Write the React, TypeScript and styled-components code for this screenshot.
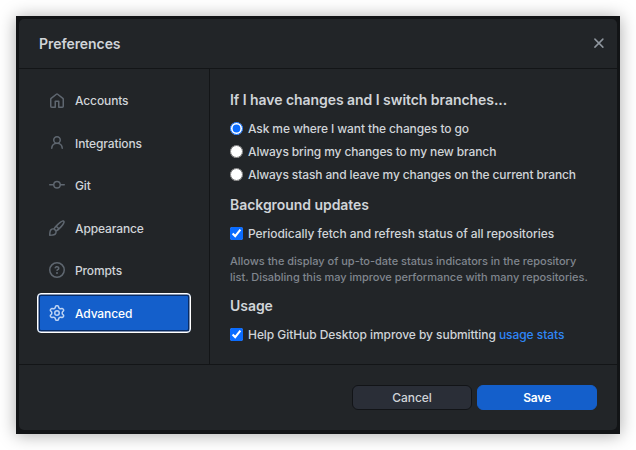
import React from "react";
import styled, { createGlobalStyle } from "styled-components";

const GlobalStyle = createGlobalStyle`
  *, *::before, *::after { box-sizing: border-box; }
  body {
    margin: 0;
    background: #fff;
    font-family: Inter, "Liberation Sans", sans-serif;
    font-size: 12px;
    font-weight: 450;
    line-height: 16px;
    color: #d0d4d8;
    overflow: hidden;
  }
`;

const Page = styled.main`
  height: 450px;
  padding: 16px;
`;

const Backdrop = styled.div`
  width: 604px;
  height: 418px;
  padding: 3px 3px 4px;
  background: #121416;
  box-shadow: 0 1px 16px rgba(0, 0, 0, 0.34);
`;

const Dialog = styled.section`
  height: 411px;
  display: flex;
  flex-direction: column;
  background: #222528;
  border-radius: 5px;
`;

const Header = styled.header`
  flex: 0 0 50px;
  display: flex;
  align-items: center;
  justify-content: space-between;
  padding: 0 13px 0 20px;
  border-bottom: 1px solid #131517;
`;

const Title = styled.h1`
  margin: 0;
  font-size: 14px;
  line-height: 20px;
  font-weight: 600;
  letter-spacing: -0.06px;
`;

const CloseButton = styled.button`
  display: flex;
  padding: 0;
  border: 0;
  background: none;
  color: #8f969e;
`;

const Body = styled.div`
  flex: 1;
  display: flex;
  min-height: 0;
`;

const Sidebar = styled.nav`
  flex: 0 0 191px;
  padding: 12px 18px 0;
  border-right: 1px solid #131517;
`;

const Tab = styled.button<{ $selected?: boolean }>`
  display: flex;
  align-items: center;
  gap: 10px;
  width: 154px;
  height: 40px;
  margin: 0 0 2.4px;
  padding: 0 0 0 ${(p) => (p.$selected ? 11 : 12)}px;
  border: ${(p) => (p.$selected ? "1px solid #fff" : "0")};
  border-radius: 4px;
  background: ${(p) => (p.$selected ? "#145fcb" : "none")};
  box-shadow: ${(p) => (p.$selected ? "inset 0 0 0 0.5px #fff, inset 0 0 0 2px #082b64" : "none")};
  color: ${(p) => (p.$selected ? "#fff" : "inherit")};
  font: inherit;
  letter-spacing: -0.12px;
  text-align: left;
  span { padding-top: ${(p) => (p.$selected ? 2 : 0.8)}px; }
  svg {
    color: ${(p) => (p.$selected ? "#bdd3f3" : "#5f6770")};
    margin-bottom: ${(p) => (p.$selected ? 0 : 1)}px;
  }
`;

const Content = styled.div`
  flex: 1;
  padding: 21px 20px 0;
`;

const Section = styled.section`
  margin-bottom: 11px;
  &:first-child { margin-bottom: 12px; }
`;

const Heading = styled.h2`
  margin: 0 0 11px;
  font-size: 14px;
  line-height: 20px;
  font-weight: 600;
  letter-spacing: -0.05px;
`;

const Option = styled.label<{ $tight?: boolean }>`
  display: flex;
  align-items: center;
  gap: 5px;
  height: 16px;
  margin-bottom: 7px;
  letter-spacing: ${(p) => (p.$tight ? "-0.12px" : "-0.06px")};
  white-space: nowrap;
  input { flex: none; width: 13px; height: 13px; margin: 0 0 1px; accent-color: #0a6cff; }
`;

const Description = styled.p`
  margin: 11px 0 0;
  font-size: 11px;
  line-height: 16px;
  letter-spacing: -0.02px;
  color: #80868e;
  white-space: nowrap;
`;

const Link = styled.a`
  color: #2f86f6;
  text-decoration: none;
`;

const Footer = styled.footer`
  flex: 0 0 66px;
  display: flex;
  justify-content: flex-end;
  gap: 5px;
  padding: 20px 20px 0;
  border-top: 1px solid #131517;
`;

const Button = styled.button<{ $primary?: boolean }>`
  width: 120px;
  height: 25px;
  padding: 0;
  border: 1px solid ${(p) => (p.$primary ? "#145fcb" : "#121417")};
  border-radius: 6px;
  background: ${(p) => (p.$primary ? "#145fcb" : "#2a2e37")};
  color: ${(p) => (p.$primary ? "#fff" : "#d0d4d8")};
  font: inherit;
  font-weight: ${(p) => (p.$primary ? 600 : 450)};
  letter-spacing: ${(p) => (p.$primary ? "-0.2px" : "-0.03px")};
`;

const icons = {
  home: "M6.906.664a1.749 1.749 0 0 1 2.187 0l5.25 4.2c.415.332.657.835.657 1.367v7.019A1.75 1.75 0 0 1 13.25 15h-3.5a.75.75 0 0 1-.75-.75V9H7v5.25a.75.75 0 0 1-.75.75h-3.5A1.75 1.75 0 0 1 1 13.25V6.23c0-.531.242-1.034.657-1.366l5.25-4.2Zm1.25 1.171a.25.25 0 0 0-.312 0l-5.25 4.2a.25.25 0 0 0-.094.196v7.019c0 .138.112.25.25.25H5.5V8.25a.75.75 0 0 1 .75-.75h3.5a.75.75 0 0 1 .75.75v5.25h2.75a.25.25 0 0 0 .25-.25V6.23a.25.25 0 0 0-.094-.195Z",
  person: "M10.561 8.073a6 6 0 0 1 3.432 5.142.75.75 0 1 1-1.498.07 4.5 4.5 0 0 0-8.99 0 .75.75 0 0 1-1.498-.07 6 6 0 0 1 3.431-5.142 3.999 3.999 0 1 1 5.123 0ZM10.5 5a2.5 2.5 0 1 0-5 0 2.5 2.5 0 0 0 5 0Z",
  commit: "M11.93 8.5a4.002 4.002 0 0 1-7.86 0H.75a.75.75 0 0 1 0-1.5h3.32a4.002 4.002 0 0 1 7.86 0h3.32a.75.75 0 0 1 0 1.5Zm-1.43-.75a2.5 2.5 0 1 0-5 0 2.5 2.5 0 0 0 5 0Z",
  brush: "M11.134 1.535c.7-.509 1.416-.942 2.076-1.155.649-.21 1.463-.267 2.069.34.603.601.568 1.411.368 2.07-.202.668-.624 1.39-1.125 2.096-1.011 1.424-2.496 2.987-3.775 4.249-1.098 1.084-2.132 1.839-3.04 2.3a3.744 3.744 0 0 1-1.055 3.217c-.431.431-1.065.691-1.657.861-.614.177-1.294.287-1.914.357A21.151 21.151 0 0 1 .797 16H.743l.007-.75H.749L.742 16a.75.75 0 0 1-.743-.742l.743-.008-.742.007v-.054a21.25 21.25 0 0 1 .13-2.284c.067-.647.187-1.287.358-1.914.17-.591.43-1.226.86-1.657a3.746 3.746 0 0 1 3.227-1.054c.466-.893 1.225-1.907 2.314-2.982 1.271-1.255 2.833-2.75 4.245-3.777ZM1.62 13.089c-.051.464-.086.929-.104 1.395.466-.018.932-.053 1.396-.104a10.511 10.511 0 0 0 1.668-.309c.526-.151.856-.325 1.011-.48a2.25 2.25 0 1 0-3.182-3.182c-.155.155-.329.485-.48 1.01a10.515 10.515 0 0 0-.309 1.67Zm10.396-10.34c-1.224.89-2.605 2.189-3.822 3.384l1.718 1.718c1.21-1.205 2.51-2.597 3.387-3.833.47-.662.78-1.227.912-1.662.134-.444.032-.551.009-.575h-.001V1.78c-.014-.014-.113-.113-.548.027-.432.14-.995.462-1.655.942Zm-4.832 7.266-.001.001a9.859 9.859 0 0 0 1.63-1.142L7.155 7.216a9.7 9.7 0 0 0-1.161 1.607c.482.302.889.71 1.19 1.192Z",
  question: "M0 8a8 8 0 1 1 16 0A8 8 0 0 1 0 8Zm8-6.5a6.5 6.5 0 1 0 0 13 6.5 6.5 0 0 0 0-13ZM6.92 6.085h.001a.749.749 0 1 1-1.342-.67c.169-.339.436-.701.849-.977C6.845 4.16 7.369 4 8 4a2.756 2.756 0 0 1 1.637.525c.503.377.863.965.863 1.725 0 .448-.115.83-.329 1.15-.205.307-.47.513-.692.662-.109.072-.22.138-.313.195l-.006.004a6.24 6.24 0 0 0-.26.16.952.952 0 0 0-.276.245.75.75 0 0 1-1.248-.832c.184-.264.42-.489.692-.661.103-.067.207-.132.313-.195l.007-.004c.1-.061.182-.11.258-.161a.969.969 0 0 0 .277-.245C8.96 6.514 9 6.427 9 6.25a.612.612 0 0 0-.262-.525A1.27 1.27 0 0 0 8 5.5c-.369 0-.595.09-.74.187a1.01 1.01 0 0 0-.34.398ZM9 11a1 1 0 1 1-2 0 1 1 0 0 1 2 0Z",
  gear: "M8 0a8.2 8.2 0 0 1 .701.031C9.444.095 9.99.645 10.16 1.29l.288 1.107c.018.066.079.158.212.224.231.114.454.243.668.386.123.082.233.09.299.071l1.103-.303c.644-.176 1.392.021 1.82.63.27.385.506.792.704 1.218.315.675.111 1.422-.364 1.891l-.814.806c-.049.048-.098.147-.088.294.016.257.016.515 0 .772-.01.147.038.246.088.294l.814.806c.475.469.679 1.216.364 1.891a7.977 7.977 0 0 1-.704 1.217c-.428.61-1.176.807-1.82.63l-1.102-.302c-.067-.019-.177-.011-.3.071a5.909 5.909 0 0 1-.668.386c-.133.066-.194.158-.211.224l-.29 1.106c-.168.646-.715 1.196-1.458 1.26a8.006 8.006 0 0 1-1.402 0c-.743-.064-1.289-.614-1.458-1.26l-.289-1.106c-.018-.066-.079-.158-.212-.224a5.738 5.738 0 0 1-.668-.386c-.123-.082-.233-.09-.299-.071l-1.103.303c-.644.176-1.392-.021-1.82-.63a8.12 8.12 0 0 1-.704-1.218c-.315-.675-.111-1.422.363-1.891l.815-.806c.05-.048.098-.147.088-.294a6.214 6.214 0 0 1 0-.772c.01-.147-.038-.246-.088-.294l-.815-.806C.635 6.045.431 5.298.746 4.623a7.92 7.92 0 0 1 .704-1.217c.428-.61 1.176-.807 1.82-.63l1.102.302c.067.019.177.011.3-.071.214-.143.437-.272.668-.386.133-.066.194-.158.211-.224l.29-1.106C6.009.645 6.556.095 7.299.03 7.53.01 7.764 0 8 0Zm-.571 1.525c-.036.003-.108.036-.137.146l-.289 1.105c-.147.561-.549.967-.998 1.189-.173.086-.34.183-.5.29-.417.278-.97.423-1.529.27l-1.103-.303c-.109-.03-.175.016-.195.045-.22.312-.412.644-.573.99-.014.031-.021.11.059.19l.815.806c.411.406.562.957.53 1.456a4.709 4.709 0 0 0 0 .582c.032.499-.119 1.05-.53 1.456l-.815.806c-.081.08-.073.159-.059.19.162.346.353.677.573.989.02.03.085.076.195.046l1.102-.303c.56-.153 1.113-.008 1.53.27.161.107.328.204.501.29.447.222.85.629.997 1.189l.289 1.105c.029.109.101.143.137.146a6.6 6.6 0 0 0 1.142 0c.036-.003.108-.036.137-.146l.289-1.105c.147-.561.549-.967.998-1.189.173-.086.34-.183.5-.29.417-.278.97-.423 1.529-.27l1.103.303c.109.029.175-.016.195-.045.22-.313.411-.644.573-.99.014-.031.021-.11-.059-.19l-.815-.806c-.411-.406-.562-.957-.53-1.456a4.709 4.709 0 0 0 0-.582c-.032-.499.119-1.05.53-1.456l.815-.806c.081-.08.073-.159.059-.19a6.464 6.464 0 0 0-.573-.989c-.02-.03-.085-.076-.195-.046l-1.102.303c-.56.153-1.113.008-1.53-.27a4.44 4.44 0 0 0-.501-.29c-.447-.222-.85-.629-.997-1.189l-.289-1.105c-.029-.11-.101-.143-.137-.146a6.6 6.6 0 0 0-1.142 0ZM11 8a3 3 0 1 1-6 0 3 3 0 0 1 6 0ZM9.5 8a1.5 1.5 0 1 0-3.001.001A1.5 1.5 0 0 0 9.5 8Z",
};

const tabs: { label: string; icon: keyof typeof icons }[] = [
  { label: "Accounts", icon: "home" },
  { label: "Integrations", icon: "person" },
  { label: "Git", icon: "commit" },
  { label: "Appearance", icon: "brush" },
  { label: "Prompts", icon: "question" },
  { label: "Advanced", icon: "gear" },
];

const branchOptions = [
  "Ask me where I want the changes to go",
  "Always bring my changes to my new branch",
  "Always stash and leave my changes on the current branch",
];

function Icon({ name }: { name: keyof typeof icons }) {
  return (
    <svg width="16" height="16" viewBox="0 0 16 16" fill="currentColor" aria-hidden="true">
      <path d={icons[name]} />
    </svg>
  );
}

export default function App() {
  return (
    <Page>
      <GlobalStyle />
      <Backdrop>
        <Dialog role="dialog" aria-label="Preferences">
          <Header>
            <Title>Preferences</Title>
            <CloseButton aria-label="Close">
              <svg width="11" height="11" viewBox="0 0 11 11" fill="none" stroke="currentColor" strokeWidth="1.5" strokeLinecap="round">
                <path d="m1.9 1.1 8 8m0-8-8 8" />
              </svg>
            </CloseButton>
          </Header>
          <Body>
            <Sidebar>
              {tabs.map((tab) => (
                <Tab key={tab.label} $selected={tab.label === "Advanced"}>
                  <Icon name={tab.icon} />
                  <span>{tab.label}</span>
                </Tab>
              ))}
            </Sidebar>
            <Content>
              <Section>
                <Heading>If I have changes and I switch branches...</Heading>
                {branchOptions.map((label, i) => (
                  <Option key={label} $tight>
                    <input type="radio" name="branch" defaultChecked={i === 0} />
                    <span>{label}</span>
                  </Option>
                ))}
              </Section>
              <Section>
                <Heading>Background updates</Heading>
                <Option>
                  <input type="checkbox" defaultChecked />
                  <span>Periodically fetch and refresh status of all repositories</span>
                </Option>
                <Description>
                  Allows the display of up-to-date status indicators in the repository
                  <br />
                  list. Disabling this may improve performance with many repositories.
                </Description>
              </Section>
              <Section>
                <Heading>Usage</Heading>
                <Option>
                  <input type="checkbox" defaultChecked />
                  <span>
                    Help GitHub Desktop improve by submitting <Link href="#">usage stats</Link>
                  </span>
                </Option>
              </Section>
            </Content>
          </Body>
          <Footer>
            <Button>Cancel</Button>
            <Button $primary>Save</Button>
          </Footer>
        </Dialog>
      </Backdrop>
    </Page>
  );
}
